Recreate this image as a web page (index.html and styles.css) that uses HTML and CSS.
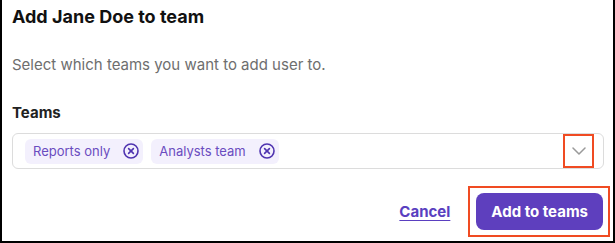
FILE: index.html
```html
<!DOCTYPE html>
<html lang="en">
<head>
  <meta charset="UTF-8">
  <title>Add Jane Doe to team</title>
  <link rel="stylesheet" href="styles.css">
</head>
<body>
  <div class="dialog">
    <h1 class="dialog-title">Add Jane Doe to team</h1>
    <p class="dialog-text">Select which teams you want to add user to.</p>

    <label class="field-label">Teams</label>
    <div class="select">
      <div class="chips">
        <span class="chip">Reports only
          <svg class="chip-x" viewBox="0 0 16 16" width="16" height="16"><circle cx="8" cy="8" r="7" fill="none" stroke="currentColor" stroke-width="1.6"/><path d="M5.6 5.6l4.8 4.8M10.4 5.6l-4.8 4.8" stroke="currentColor" stroke-width="1.6" stroke-linecap="round"/></svg>
        </span>
        <span class="chip">Analysts team
          <svg class="chip-x" viewBox="0 0 16 16" width="16" height="16"><circle cx="8" cy="8" r="7" fill="none" stroke="currentColor" stroke-width="1.6"/><path d="M5.6 5.6l4.8 4.8M10.4 5.6l-4.8 4.8" stroke="currentColor" stroke-width="1.6" stroke-linecap="round"/></svg>
        </span>
      </div>
      <div class="select-toggle highlight">
        <svg viewBox="0 0 14 8" width="14" height="8"><path d="M1 1l6 6 6-6" fill="none" stroke="#9a9a9a" stroke-width="1.5" stroke-linecap="round" stroke-linejoin="round"/></svg>
      </div>
    </div>

    <div class="dialog-footer">
      <a class="cancel-link" href="#">Cancel</a>
      <span class="button-frame highlight">
        <button class="primary-button">Add to teams</button>
      </span>
    </div>
  </div>
</body>
</html>
```

FILE: styles.css
```css
/* Base */
html, body {
  margin: 0;
  padding: 0;
  background: #fff;
}

body {
  font-family: 'Inter', 'Noto Sans', sans-serif;
  color: #1a1a1a;
}

/* Modal con el borde negro del recorte */
.dialog {
  width: 615px;
  height: 243px;
  box-sizing: border-box;
  border-left: 2px solid #000;
  border-right: 2px solid #000;
  border-bottom: 2px solid #000;
  padding: 4px 9px 0 10px;
}

.dialog-title {
  margin: 0;
  font-size: 18px;
  line-height: 26px;
  font-weight: 700;
  color: #111;
}

.dialog-text {
  margin: 25px 0 0;
  font-size: 15px;
  line-height: 20px;
  color: #6e6e6e;
}

.field-label {
  display: block;
  margin-top: 28px;
  font-size: 15px;
  line-height: 20px;
  font-weight: 700;
  color: #222;
}

/* Caja del select */
.select {
  margin-top: 10px;
  height: 36px;
  box-sizing: border-box;
  border: 1px solid #dcdcdc;
  border-radius: 6px;
  display: flex;
  align-items: center;
  justify-content: space-between;
  padding: 0 9px 0 12px;
}

.chips {
  display: flex;
  gap: 8px;
}

.chip {
  display: inline-flex;
  align-items: center;
  gap: 13px;
  height: 25px;
  padding: 0 4px 0 8px;
  border-radius: 6px;
  background: #f3f0fd;
  color: #6a4cc0;
  font-size: 13px;
}

.chip-x {
  color: #4f34b0;
}

.select-toggle {
  width: 31px;
  height: 34px;
  box-sizing: border-box;
  display: flex;
  align-items: center;
  justify-content: center;
}

/* Recuadros rojos de anotación */
.highlight {
  border: 2px solid #f04b22;
}

/* Pie con acciones */
.dialog-footer {
  display: flex;
  justify-content: flex-end;
  align-items: center;
  gap: 18px;
  margin-top: 17px;
  margin-right: -6px;
}

.cancel-link {
  color: #5a3fc0;
  font-size: 15px;
  font-weight: 700;
  text-decoration: underline;
  text-underline-offset: 3px;
}

.button-frame {
  display: flex;
  padding: 5px 5px 5px 6px;
}

.primary-button {
  height: 37px;
  padding: 0 15px;
  border: none;
  border-radius: 8px;
  background: #5e3fbe;
  color: #fff;
  font-family: inherit;
  font-size: 15px;
  font-weight: 700;
}
```
